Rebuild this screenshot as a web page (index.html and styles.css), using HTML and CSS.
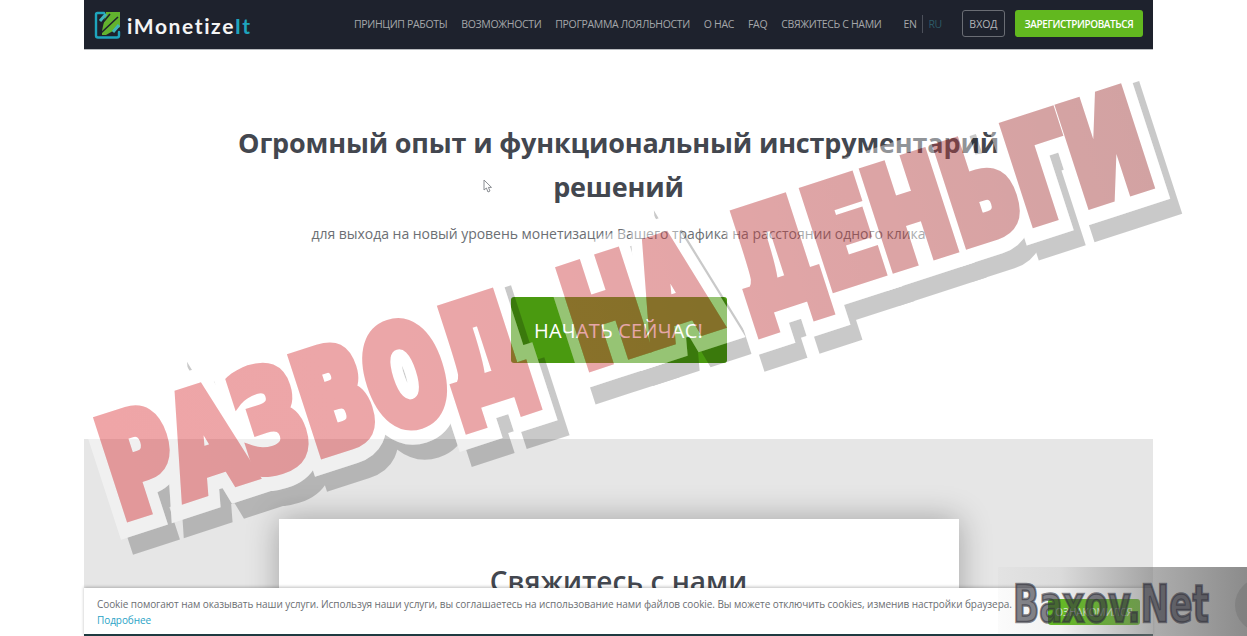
FILE: index.html
```html
<!DOCTYPE html>
<html lang="ru">
<head>
<meta charset="utf-8">
<title>iMonetizeIt</title>
<link rel="stylesheet" href="styles.css">
</head>
<body>
<div class="page">
  <header class="nav">
    <a class="logo">
      <svg class="logo-icon" width="27" height="30" viewBox="0 0 27 30">
        <path d="M10 3H3.5Q2 3 2 4.5V25.5Q2 27.5 4 27.5H23Q25 27.5 25 25.5V22" class="logo-frame"/>
        <path d="M12 2H26V17L12 25H8V21Z" class="logo-green"/>
        <path d="M6 16L16 4M7 23L24 7" class="logo-cut"/>
        <path d="M6 11L12 4M19 22L25 15" class="logo-teal"/>
      </svg>
      <span class="logo-text">iMonetize<span class="logo-accent">It</span></span>
    </a>
    <nav class="menu">
      <a>ПРИНЦИП РАБОТЫ</a>
      <a>ВОЗМОЖНОСТИ</a>
      <a>ПРОГРАММА ЛОЯЛЬНОСТИ</a>
      <a>О НАС</a>
      <a>FAQ</a>
      <a>СВЯЖИТЕСЬ С НАМИ</a>
    </nav>
    <div class="langs"><a>EN</a><a class="lang-active">RU</a></div>
    <a class="btn-login">ВХОД</a>
    <a class="btn-register">ЗАРЕГИСТРИРОВАТЬСЯ</a>
  </header>
  <section class="hero">
    <h1>Огромный опыт и функциональный инструментарий решений</h1>
    <p>для выхода на новый уровень монетизации Вашего трафика на расстоянии одного клика</p>
    <a class="btn-start">НАЧАТЬ СЕЙЧАС!</a>
  </section>
  <section class="contact">
    <div class="card">
      <h2>Свяжитесь с нами</h2>
    </div>
  </section>
</div>

<div class="cookie">
  <div class="cookie-text">
    <div>Cookie помогают нам оказывать наши услуги. Используя наши услуги, вы соглашаетесь на использование нами файлов cookie. Вы можете отключить cookies, изменив настройки браузера.</div>
    <a>Подробнее</a>
  </div>
  <a class="cookie-btn">ОЗНАКОМИЛСЯ</a>
</div>

<svg class="cursor" width="10" height="15" viewBox="0 0 10 15">
  <path d="M1 1V11L3.4 9L5 13L7 12L5.4 8.4H8.5Z"/>
</svg>

<svg class="stamp" width="1247" height="636" viewBox="0 0 1247 636">
  <defs>
    <linearGradient id="stampFill" gradientUnits="userSpaceOnUse" x1="0" y1="0" x2="1100" y2="0">
      <stop offset="0" stop-color="#df4246"/>
      <stop offset="0.45" stop-color="#d04448"/>
      <stop offset="1" stop-color="#a03c3c"/>
    </linearGradient>
    <linearGradient id="markBg" gradientUnits="userSpaceOnUse" x1="998" y1="0" x2="1247" y2="0">
      <stop offset="0" stop-color="#777" stop-opacity="0.03"/>
      <stop offset="0.25" stop-color="#777" stop-opacity="0.1"/>
      <stop offset="0.62" stop-color="#777" stop-opacity="0.6"/>
      <stop offset="1" stop-color="#777" stop-opacity="0.85"/>
    </linearGradient>
    <g id="words" class="stamp-words">
      <text x="6" y="-6" textLength="434" lengthAdjust="spacingAndGlyphs">РАЗВОД</text>
      <text x="492" y="-6" textLength="142" lengthAdjust="spacingAndGlyphs">НА</text>
      <text x="666" y="-6" textLength="428" lengthAdjust="spacingAndGlyphs">ДЕНЬГИ</text>
    </g>
    <mask id="noFill" maskUnits="userSpaceOnUse" x="0" y="0" width="1247" height="636">
      <rect width="1247" height="636" fill="#fff"/>
      <use href="#words" transform="translate(118 525) rotate(-18)" class="mask-fill"/>
    </mask>
    <mask id="noOutline" maskUnits="userSpaceOnUse" x="0" y="0" width="1247" height="636">
      <rect width="1247" height="636" fill="#fff"/>
      <use href="#words" transform="translate(118 525) rotate(-18)" class="mask-outline"/>
    </mask>
  </defs>
  <g mask="url(#noOutline)">
    <g class="layer-shadow">
      <use href="#words" transform="translate(130 540) rotate(-18)" class="words-shadow"/>
    </g>
  </g>
  <g mask="url(#noFill)">
    <g class="layer-outline">
      <use href="#words" transform="translate(118 525) rotate(-18)" class="words-outline"/>
    </g>
  </g>
  <g class="layer-fill">
    <use href="#words" transform="translate(118 525) rotate(-18)" class="words-fill"/>
  </g>
  <rect x="998" y="567" width="249" height="69" fill="url(#markBg)"/>
  <circle cx="1262" cy="605" r="27" class="mark-circle"/>
  <text x="1013" y="622" textLength="196" lengthAdjust="spacingAndGlyphs" class="mark-text">Baxov.Net</text>
</svg>
</body>
</html>
```
FILE: styles.css
```css
* { box-sizing: border-box; }
html, body { margin: 0; padding: 0; background: #fff; overflow: hidden; }
body { width: 1247px; height: 636px; font-family: "Open Sans", "Noto Sans", sans-serif; }

.page {
  width: 1069px;
  height: 636px;
  margin-left: 84px;
  display: flex;
  flex-direction: column;
  overflow: hidden;
}

.nav {
  height: 50px;
  flex: none;
  display: flex;
  align-items: center;
  padding: 0 10px 2px;
  background: #1e222d;
  border-bottom: 1px solid #b9bbbf;
}
.logo { display: flex; align-items: center; width: 260px; flex: none; padding-top: 3px; }
.logo-icon { flex: none; margin-right: 6px; }
.logo-frame { fill: none; stroke: #1ea5bd; stroke-width: 2.4; stroke-linecap: round; }
.logo-green { fill: #62b32e; }
.logo-cut { fill: none; stroke: #1e222d; stroke-width: 1.6; }
.logo-teal { fill: none; stroke: #3fb4bd; stroke-width: 3; }
.logo-text {
  font-family: "Lato", sans-serif;
  font-weight: 700;
  font-size: 21px;
  letter-spacing: 1.6px;
  color: #f4f4f4;
}
.logo-accent { color: #1ea5bd; }

.menu { display: flex; gap: 14px; flex: none; }
.menu a, .langs a {
  font-size: 10.5px;
  letter-spacing: -0.34px;
  color: #a5a7aa;
  white-space: nowrap;
}
.langs { display: flex; align-items: center; margin-left: 22px; flex: none; }
.langs a:first-child { padding-right: 6px; border-right: 1px solid #4c505a; line-height: 18px; }
.lang-active { padding-left: 5px; }
.langs .lang-active { color: #2d5a66; }

.btn-login {
  margin-left: 20px;
  width: 43px;
  height: 27px;
  flex: none;
  display: flex;
  align-items: center;
  justify-content: center;
  border: 1px solid #6a6d74;
  border-radius: 3px;
  font-size: 10.5px;
  color: #b4b5b8;
}
.btn-register {
  margin-left: 10px;
  width: 128px;
  height: 27px;
  flex: none;
  display: flex;
  align-items: center;
  justify-content: center;
  border-radius: 3px;
  background: #62b81f;
  font-size: 10px;
  font-weight: 600;
  letter-spacing: -0.4px;
  color: #fff;
  white-space: nowrap;
}

.hero {
  height: 389px;
  flex: none;
  display: flex;
  flex-direction: column;
  align-items: center;
  padding-top: 71px;
  background: #fff;
}
.hero h1 {
  width: 800px;
  margin: 0;
  font-size: 27px;
  line-height: 44px;
  font-weight: 700;
  letter-spacing: -0.17px;
  text-align: center;
  color: #43474f;
}
.hero p {
  margin: 15px 0 0;
  font-size: 14px;
  line-height: 20px;
  letter-spacing: -0.03px;
  color: #6c6f74;
}
.btn-start {
  margin-top: 53px;
  width: 216px;
  height: 66px;
  flex: none;
  display: flex;
  align-items: center;
  justify-content: center;
  border-radius: 3px;
  background: #4a9a10;
  font-size: 20px;
  letter-spacing: 0.2px;
  color: #fff;
}

.contact {
  flex: 1;
  background: #e6e6e6;
  padding-top: 80px;
  display: flex;
  justify-content: center;
}
.card {
  width: 680px;
  height: 300px;
  padding-top: 44px;
  background: #fff;
  box-shadow: 0 0 30px rgba(0, 0, 0, 0.3);
}
.card h2 {
  margin: 0;
  font-size: 28px;
  line-height: 36px;
  font-weight: 600;
  text-align: center;
  color: #43474f;
}

.cookie {
  position: absolute;
  left: 84px;
  top: 588px;
  width: 1069px;
  height: 48px;
  display: flex;
  justify-content: space-between;
  padding: 8px 13px 0;
  background: #fff;
  border-bottom: 2px solid #1e3a40;
  box-shadow: 0 -1px 3px rgba(0, 0, 0, 0.25);
}
.cookie-text { font-size: 10px; line-height: 16px; letter-spacing: -0.07px; color: #6b6e72; white-space: nowrap; }
.cookie-text a { color: #2aa3c6; }
.cookie-btn {
  width: 92px;
  height: 26px;
  margin-top: 3px;
  flex: none;
  display: flex;
  align-items: center;
  justify-content: center;
  border-radius: 3px;
  background: #62c01c;
  font-size: 10px;
  color: #e8f3df;
}

.cursor { position: absolute; left: 483px; top: 179px; }
.cursor path { fill: #fff; stroke: #8a8d92; stroke-width: 1; }

.stamp { position: absolute; left: 0; top: 0; pointer-events: none; }
.stamp-words {
  font-family: "Liberation Sans Narrow", "DejaVu Sans Condensed", sans-serif;
  font-weight: 700;
  font-size: 134px;
  stroke-linejoin: miter;
}
.mask-fill { fill: #000; stroke: #000; stroke-width: 13; }
.mask-outline { fill: #000; stroke: #000; stroke-width: 42; stroke-linejoin: round; }
.layer-shadow { opacity: 0.21; }
.words-shadow { fill: #000; stroke: #000; stroke-width: 42; stroke-linejoin: round; }
.layer-outline { opacity: 0.42; }
.words-outline { fill: #fff; stroke: #fff; stroke-width: 42; stroke-linejoin: round; }
.layer-fill { opacity: 0.47; }
.words-fill { fill: url(#stampFill); stroke: url(#stampFill); stroke-width: 13; }
.mark-circle { fill: rgba(90, 90, 90, 0.25); }
.mark-text {
  font-family: "Liberation Sans Narrow", "DejaVu Sans Condensed", sans-serif;
  font-weight: 700;
  font-size: 52px;
  stroke: rgba(50, 50, 60, 0.62);
  stroke-width: 2.5;
  fill: rgba(50, 50, 60, 0.62);
  paint-order: stroke;
}
```
